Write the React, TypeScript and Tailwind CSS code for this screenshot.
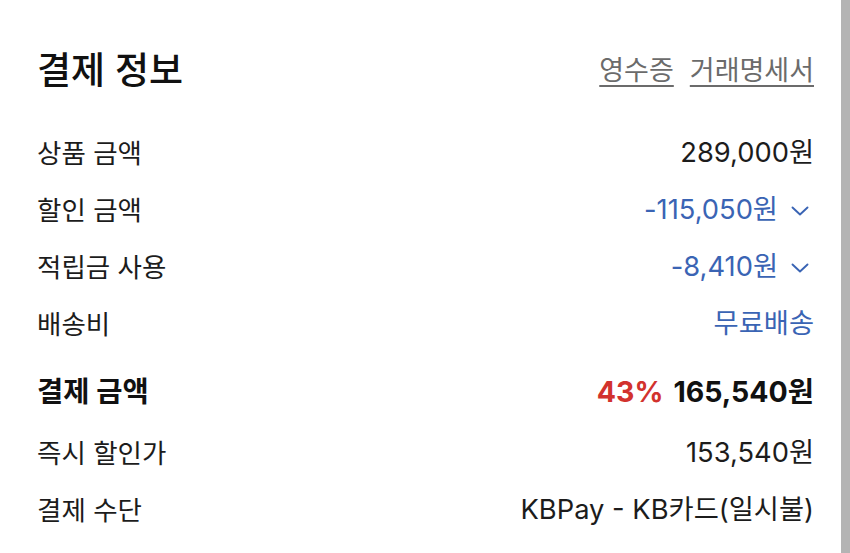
import React from 'react';

interface Row {
    label: string;
    value: string;
    tone?: 'blue';
    chevron?: boolean;
}

const topRows: Row[] = [
    {label: '상품 금액', value: '289,000원'},
    {label: '할인 금액', value: '-115,050원', tone: 'blue', chevron: true},
    {label: '적립금 사용', value: '-8,410원', tone: 'blue', chevron: true},
    {label: '배송비', value: '무료배송', tone: 'blue'},
];

const Chevron = () => (
    <svg width="18" height="10" viewBox="0 0 18 10" fill="none" className="ml-[13px] mr-[5px]">
        <path d="M1.5 1.5 L9 8.5 L16.5 1.5" stroke="currentColor" strokeWidth="1.9" strokeLinecap="round" strokeLinejoin="round" />
    </svg>
);

const InfoRow: React.FC<{row: Row}> = ({row}) => (
    <div className="h-[57px] flex items-center justify-between">
        <span className="text-[#1c1c1c]">{row.label}</span>
        <span className={`flex items-center text-[27.3px] ${row.tone === 'blue' ? 'text-[#3a64b4]' : 'text-[#1c1c1c]'}`}>
            {row.value}
            {row.chevron && <Chevron />}
        </span>
    </div>
);

export default function App() {
    return (
        <div className="w-[850px] h-[553px] flex bg-white font-[Inter,'Noto_Sans_CJK_KR',sans-serif] overflow-hidden">
            <div className="flex-1 pl-[37px] pr-[27px] pt-[40px]">
                {/* Header */}
                <div className="h-[62px] flex items-center justify-between">
                    <h1 className="text-[37px] leading-[1.2] font-medium text-[#111]">결제 정보</h1>
                    <div className="flex items-center gap-[16px] text-[27px] leading-[1.2] text-[#6b6b6b]">
                        <span className="underline underline-offset-[5px] decoration-[1.5px]">영수증</span>
                        <span className="underline underline-offset-[5px] decoration-[1.5px]">거래명세서</span>
                    </div>
                </div>

                <div className="mt-[23px] text-[26.5px] leading-[1.2]">
                    {topRows.map((row) => (
                        <InfoRow key={row.label} row={row} />
                    ))}

                    <div className="mt-[11px] h-[57px] flex items-center justify-between text-[28.5px] font-bold text-[#111]">
                        <span>결제 금액</span>
                        <span>
                            <span className="text-[#d2322d] mr-[10px]">43%</span>
                            165,540원
                        </span>
                    </div>

                    <div className="mt-[4px]">
                        <InfoRow row={{label: '즉시 할인가', value: '153,540원'}} />
                        <InfoRow row={{label: '결제 수단', value: 'KBPay - KB카드(일시불)'}} />
                    </div>
                </div>
            </div>
            <div className="w-[9px] h-full bg-[#b4b4b4]" />
        </div>
    );
}
